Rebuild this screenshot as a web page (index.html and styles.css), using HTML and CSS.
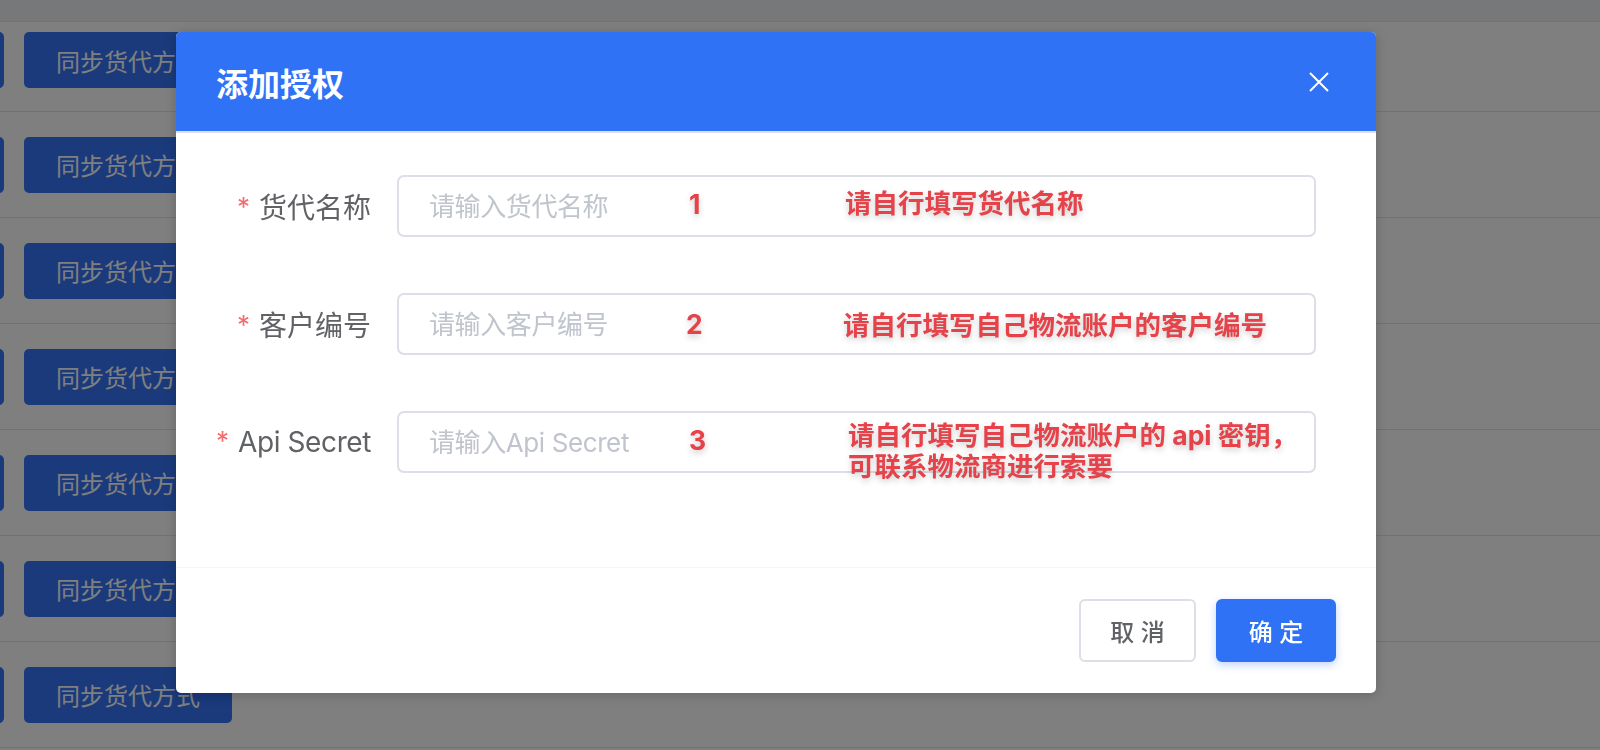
FILE: index.html
```html
<!DOCTYPE html>
<html lang="zh-CN">

<head>
    <meta charset="UTF-8">
    <meta name="viewport" content="width=device-width, initial-scale=1.0">
    <title>添加授权</title>
    <link rel="stylesheet" href="styles.css">
</head>

<body>
    <div class="page">
        <div class="table-head"></div>
        <div class="table-row table-row-cut">
            <div class="ops"><button class="btn-op" aria-label="授权"></button><button class="btn-op btn-op-wide">同步货代方式</button></div>
        </div>
        <div class="table-row">
            <div class="ops"><button class="btn-op" aria-label="授权"></button><button class="btn-op btn-op-wide">同步货代方式</button></div>
        </div>
        <div class="table-row">
            <div class="ops"><button class="btn-op" aria-label="授权"></button><button class="btn-op btn-op-wide">同步货代方式</button></div>
        </div>
        <div class="table-row">
            <div class="ops"><button class="btn-op" aria-label="授权"></button><button class="btn-op btn-op-wide">同步货代方式</button></div>
        </div>
        <div class="table-row">
            <div class="ops"><button class="btn-op" aria-label="授权"></button><button class="btn-op btn-op-wide">同步货代方式</button></div>
        </div>
        <div class="table-row">
            <div class="ops"><button class="btn-op" aria-label="授权"></button><button class="btn-op btn-op-wide">同步货代方式</button></div>
        </div>
        <div class="table-row">
            <div class="ops"><button class="btn-op" aria-label="授权"></button><button class="btn-op btn-op-wide">同步货代方式</button></div>
        </div>
    </div>

    <div class="mask"></div>

    <div class="dialog">
        <div class="dialog-header">
            <span class="dialog-title">添加授权</span>
            <button class="dialog-close" type="button">
                <svg width="20" height="20" viewBox="0 0 20 20">
                    <path d="M1 1L19 19M19 1L1 19" stroke="#fff" stroke-width="2" fill="none" />
                </svg>
            </button>
        </div>

        <div class="dialog-body">
            <form class="auth-form">
                <div class="form-item">
                    <label class="form-label" for="forwarderName"><span class="required">*</span>货代名称</label>
                    <div class="form-content">
                        <input class="form-input" type="text" id="forwarderName" placeholder="请输入货代名称">
                        <span class="note-num note-num-1">1</span>
                        <span class="note-text note-text-1">请自行填写货代名称</span>
                    </div>
                </div>

                <div class="form-item">
                    <label class="form-label" for="customerNo"><span class="required">*</span>客户编号</label>
                    <div class="form-content">
                        <input class="form-input" type="text" id="customerNo" placeholder="请输入客户编号">
                        <span class="note-num note-num-2">2</span>
                        <span class="note-text note-text-2">请自行填写自己物流账户的客户编号</span>
                    </div>
                </div>

                <div class="form-item">
                    <label class="form-label" for="apiSecret"><span class="required">*</span><span class="label-latin">Api Secret</span></label>
                    <div class="form-content">
                        <input class="form-input" type="text" id="apiSecret" placeholder="请输入Api Secret">
                        <span class="note-num note-num-3">3</span>
                        <span class="note-text note-text-3">请自行填写自己物流账户的 api 密钥，<br>可联系物流商进行索要</span>
                    </div>
                </div>
            </form>
        </div>

        <div class="dialog-footer">
            <button class="btn btn-default" type="button">取 消</button>
            <button class="btn btn-primary" type="button">确 定</button>
        </div>
    </div>
</body>

</html>
```

FILE: styles.css
```css
body {
    font-family: "Inter", "Noto Sans CJK SC", sans-serif;
    background-color: #fff;
    margin: 0;
    padding: 0;
    overflow: hidden;
}

/* background table */
.page {
    height: 750px;
    overflow: hidden;
}

.table-head {
    height: 21px;
    background-color: #eef0f3;
    border-bottom: 1px solid #e2e4ea;
}

.table-row {
    height: 105px;
    border-bottom: 1px solid #e2e4ea;
    display: flex;
    align-items: center;
}

.table-row-cut {
    height: 90px;
    align-items: flex-start;
    padding-top: 10px;
    box-sizing: border-box;
}

.ops {
    display: flex;
    gap: 20px;
    margin-left: -96px;
}

.btn-op {
    width: 100px;
    height: 56px;
    border: none;
    border-radius: 5px;
    background-color: #3575f6;
    color: #fff;
    font-family: inherit;
    font-size: 24px;
}

.btn-op-wide {
    width: 208px;
}

.mask {
    position: fixed;
    inset: 0;
    background-color: rgba(0, 0, 0, 0.5);
}

/* dialog */
.dialog {
    position: absolute;
    left: 176px;
    top: 32px;
    width: 1200px;
    background-color: #fff;
    border-radius: 5px;
    overflow: hidden;
    box-shadow: 0 2px 12px rgba(0, 0, 0, 0.2);
}

.dialog-header {
    height: 99px;
    background-color: #2f72f6;
    border-bottom: 2px solid #dcdfe6;
    display: flex;
    align-items: center;
    justify-content: space-between;
    padding: 0 47px 0 40px;
}

.dialog-title {
    color: #fff;
    font-size: 32px;
    font-weight: 700;
}

.dialog-close {
    width: 20px;
    height: 20px;
    padding: 0;
    border: none;
    background: none;
    display: flex;
}

.dialog-body {
    height: 434px;
    box-sizing: border-box;
    padding: 42px 60px 0 0;
}

.form-item {
    display: flex;
    align-items: center;
    margin-bottom: 56px;
}

.form-label {
    width: 221px;
    padding-right: 26px;
    box-sizing: border-box;
    text-align: right;
    font-size: 28px;
    color: #606266;
}

.label-latin {
    letter-spacing: -0.4px;
}

.required {
    color: #f56c6c;
    font-size: 26px;
    margin-right: 9px;
    position: relative;
    top: -2px;
}

.form-content {
    flex: 1;
    position: relative;
}

.form-input {
    width: 100%;
    height: 62px;
    padding: 0 30px;
    border: 2px solid #dcdfe6;
    border-radius: 7px;
    box-sizing: border-box;
    font-family: inherit;
    font-size: 26px;
    letter-spacing: -0.4px;
    color: #606266;
    outline: none;
}

.form-input::placeholder {
    color: #c0c4cc;
}

/* red annotations drawn over the form */
.note-num,
.note-text {
    position: absolute;
    color: #e5424a;
    font-weight: 700;
    font-size: 26.5px;
    line-height: 30px;
    text-shadow: 0 3px 6px rgba(0, 0, 0, 0.2);
    white-space: nowrap;
}

.note-num {
    left: 292px;
    top: 14px;
}

.note-num-2 {
    left: 289px;
    top: 16px;
}

.note-text-1 {
    left: 448px;
    top: 13px;
}

.note-text-2 {
    left: 446px;
    top: 17px;
}

.note-text-3 {
    left: 451px;
    top: 9px;
    line-height: 31px;
}

.dialog-footer {
    border-top: 1px solid #f4f5f7;
    padding: 31px 40px;
    display: flex;
    justify-content: flex-end;
    gap: 20px;
}

.btn {
    height: 63px;
    padding: 0;
    border-radius: 6px;
    font-family: inherit;
    font-size: 24px;
    font-weight: 500;
    cursor: pointer;
}

.btn-default {
    width: 117px;
    background-color: #fff;
    border: 2px solid #dcdfe6;
    color: #606266;
}

.btn-primary {
    width: 120px;
    background-color: #2f72f6;
    border: 2px solid #2f72f6;
    color: #fff;
    box-shadow: 0 3px 8px rgba(47, 114, 246, 0.3);
}
```
